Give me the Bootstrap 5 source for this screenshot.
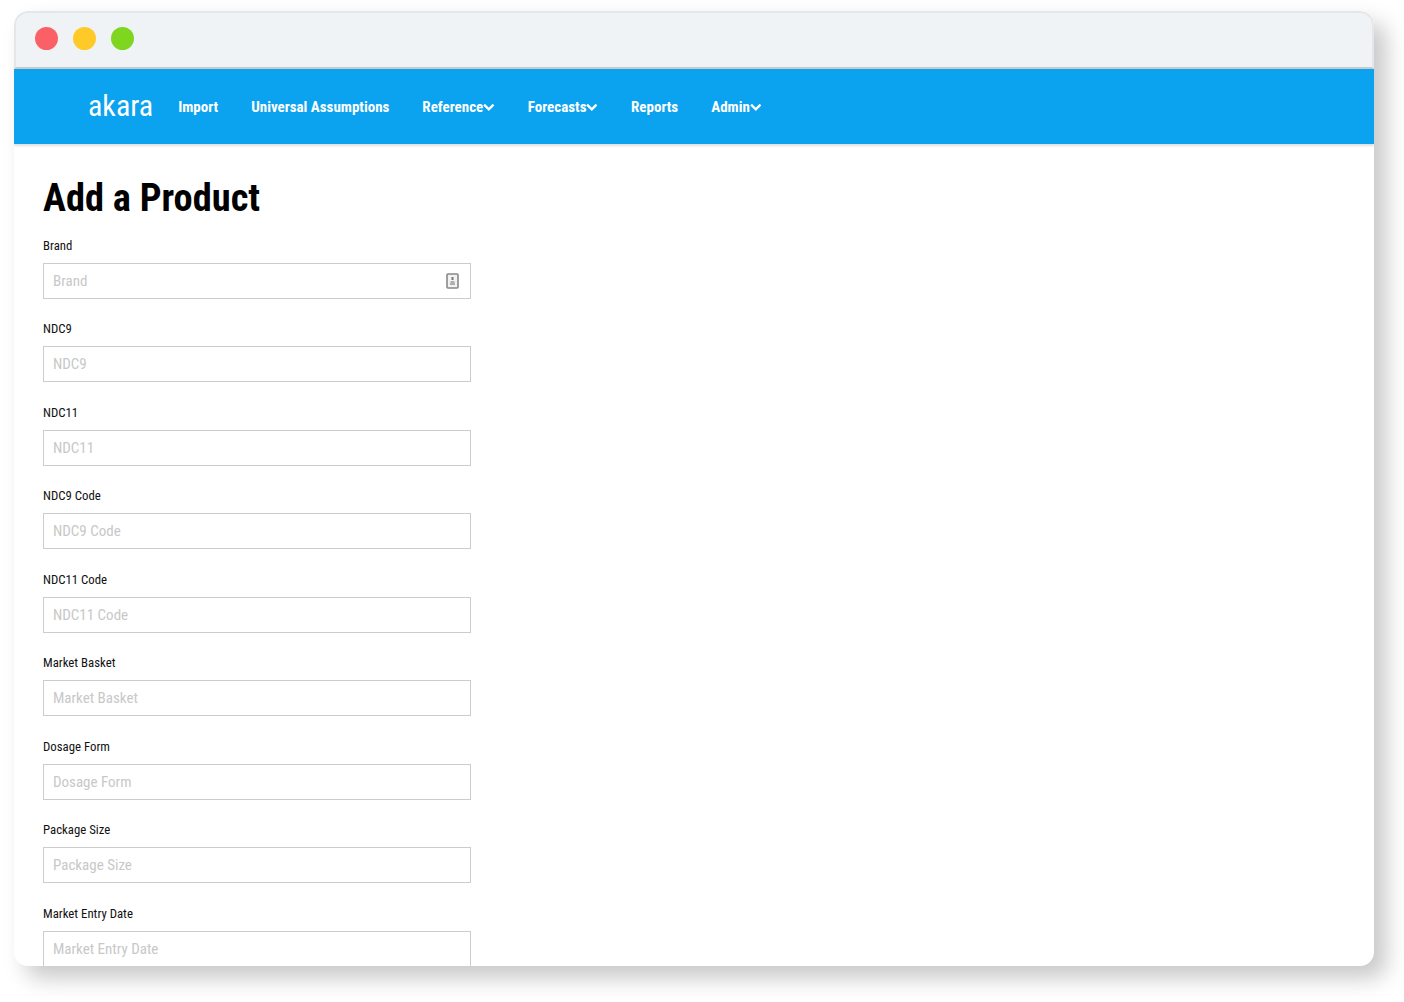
<!DOCTYPE html>
<html lang="en">
<head>
<meta charset="utf-8">
<title>Add a Product</title>
<link rel="stylesheet" href="https://cdn.jsdelivr.net/npm/bootstrap@5.3.0/dist/css/bootstrap.min.css">
<style>
html,body{height:100%;background:#fff;overflow:hidden}
body{font-family:"Roboto",sans-serif;font-stretch:condensed;padding:11px 30px 0 14px}
.win{width:1360px;height:955px;border-radius:14px;overflow:hidden;background:#fff;box-shadow:12px 12px 22px rgba(0,0,0,.22)}
.chrome{height:58px;background:#eff3f6;border:2px solid #e4e7ea;border-bottom:2px solid #c8c9cb;border-radius:14px 14px 0 0;padding:0 0 4px 19px;gap:15px}
.dot{width:23px;height:23px;border-radius:50%}
.dot-r{background:#fb6066}.dot-y{background:#ffc928}.dot-g{background:#7ed61f}
.topbar{height:75px;background:#0ba2ef;padding:0 0 0 74px;box-shadow:0 2px 2px rgba(0,0,0,.12)}
.logo{color:#fff;font-size:30px;font-weight:400;margin-right:25px;line-height:1;position:relative;top:-1px}
.toplink{color:#fff;font-size:15px;font-weight:700;text-decoration:none;margin-right:33px;line-height:1;padding-top:2px}
.toplink svg{width:11.6px;height:8.4px;margin:0 0 2px}
.pg{padding:31px 29px 0}
.pg h1{font-size:38.4px;font-weight:700;color:#000;margin:0 0 15.6px;line-height:46px}
.fld{width:428px;margin-bottom:21.5px}
.fld label{display:block;font-size:12.8px;color:#111;margin-bottom:8px;line-height:18px}
.fld .form-control{height:36px;border:1px solid #ccc;border-radius:0;font-family:inherit;font-stretch:condensed;font-size:15px;padding:0 9px;box-shadow:none}
.fld .form-control::placeholder{color:#c8c8c8}
.ico{right:12px;top:10px;width:13px;height:16px}
</style>
</head>
<body>
<div class="win">
  <div class="chrome d-flex align-items-center">
    <span class="dot dot-r"></span><span class="dot dot-y"></span><span class="dot dot-g"></span>
  </div>
  <nav class="topbar d-flex align-items-center">
    <span class="logo">akara</span>
    <a class="toplink" href="#">Import</a>
    <a class="toplink" href="#">Universal Assumptions</a>
    <a class="toplink" href="#">Reference<svg viewBox="0 0 11 8"><path d="M1 1.5l4.5 4.5L10 1.5" fill="none" stroke="#fff" stroke-width="2.2"/></svg></a>
    <a class="toplink" href="#">Forecasts<svg viewBox="0 0 11 8"><path d="M1 1.5l4.5 4.5L10 1.5" fill="none" stroke="#fff" stroke-width="2.2"/></svg></a>
    <a class="toplink" href="#">Reports</a>
    <a class="toplink" href="#">Admin<svg viewBox="0 0 11 8"><path d="M1 1.5l4.5 4.5L10 1.5" fill="none" stroke="#fff" stroke-width="2.2"/></svg></a>
  </nav>
  <main class="pg">
    <h1>Add a Product</h1>
    <div class="fld"><label>Brand</label>
      <div class="position-relative"><input class="form-control" placeholder="Brand">
        <svg class="ico position-absolute" viewBox="0 0 13 16"><rect x="1" y="1" width="11" height="14" rx="1" fill="#f2f2f2" stroke="#888" stroke-width="1.6"/><path d="M6.5 4v3" stroke="#777" stroke-width="2"/><path d="M4 11h5M4.5 9h4" stroke="#999" stroke-width="1.4"/></svg>
      </div></div>
    <div class="fld"><label>NDC9</label><input class="form-control" placeholder="NDC9"></div>
    <div class="fld"><label>NDC11</label><input class="form-control" placeholder="NDC11"></div>
    <div class="fld"><label>NDC9 Code</label><input class="form-control" placeholder="NDC9 Code"></div>
    <div class="fld"><label>NDC11 Code</label><input class="form-control" placeholder="NDC11 Code"></div>
    <div class="fld"><label>Market Basket</label><input class="form-control" placeholder="Market Basket"></div>
    <div class="fld"><label>Dosage Form</label><input class="form-control" placeholder="Dosage Form"></div>
    <div class="fld"><label>Package Size</label><input class="form-control" placeholder="Package Size"></div>
    <div class="fld"><label>Market Entry Date</label><input class="form-control" placeholder="Market Entry Date"></div>
  </main>
</div>
<script src="https://cdn.jsdelivr.net/npm/bootstrap@5.3.0/dist/js/bootstrap.bundle.min.js"></script>
</body>
</html>
